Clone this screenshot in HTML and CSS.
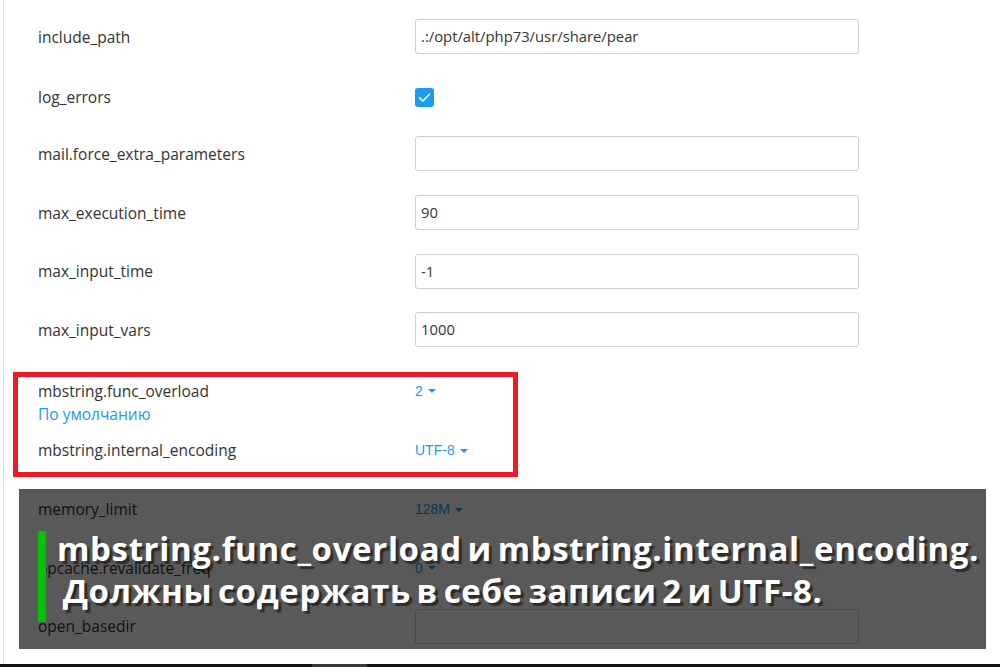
FILE: index.html
```html
<!DOCTYPE html>
<html lang="ru">
<head>
<meta charset="utf-8">
<title>PHP settings</title>
<link rel="stylesheet" href="styles.css">
</head>
<body>
<div class="screen">
  <div class="viewport">
    <div class="sheet">
      <div class="form">
        <div class="row">
          <div class="label">include_path</div>
          <div class="value"><div class="input">.:/opt/alt/php73/usr/share/pear</div></div>
        </div>
        <div class="row row-check">
          <div class="label">log_errors</div>
          <div class="value">
            <span class="checkbox">
              <svg width="19" height="19" viewBox="0 0 19 19"><path d="M4.5 9.8 L7.9 13 L14.5 6.2" fill="none" stroke="#fff" stroke-width="1.6" stroke-linecap="round" stroke-linejoin="round"/></svg>
            </span>
          </div>
        </div>
        <div class="row">
          <div class="label">mail.force_extra_parameters</div>
          <div class="value"><div class="input"></div></div>
        </div>
        <div class="row">
          <div class="label">max_execution_time</div>
          <div class="value"><div class="input">90</div></div>
        </div>
        <div class="row">
          <div class="label">max_input_time</div>
          <div class="value"><div class="input">-1</div></div>
        </div>
        <div class="row">
          <div class="label">max_input_vars</div>
          <div class="value"><div class="input">1000</div></div>
        </div>
        <div class="row row-noted">
          <div class="label">mbstring.func_overload</div>
          <div class="value"><span class="select">2<span class="caret"></span></span></div>
          <div class="note">По умолчанию</div>
        </div>
        <div class="row">
          <div class="label">mbstring.internal_encoding</div>
          <div class="value"><span class="select">UTF-8<span class="caret"></span></span></div>
        </div>
        <div class="row">
          <div class="label">memory_limit</div>
          <div class="value"><span class="select">128M<span class="caret"></span></span></div>
        </div>
        <div class="row">
          <div class="label">opcache.revalidate_freq</div>
          <div class="value"><span class="select">0<span class="caret"></span></span></div>
        </div>
        <div class="row">
          <div class="label">open_basedir</div>
          <div class="value"><div class="input"></div></div>
        </div>
      </div>

      <div class="highlight"></div>

      <div class="caption">
        <div class="caption-bar"></div>
        <div class="caption-text">
          <div class="caption-line">mbstring.func_overload и mbstring.internal_encoding.</div>
          <div class="caption-line"> Должны содержать в себе записи 2 и UTF-8.</div>
        </div>
      </div>
    </div>
  </div>
  <div class="scrollbar"><div class="scroll-thumb"></div></div>
</div>
</body>
</html>
```

FILE: styles.css
```css
* { box-sizing: border-box; }

html, body {
  margin: 0;
  padding: 0;
  background: #fff;
}

body {
  font-family: "Open Sans", "Noto Sans", sans-serif;
  font-size: 15.5px;
  color: #333;
}

.screen {
  width: 1000px;
  height: 667px;
  display: flex;
  flex-direction: column;
  overflow: hidden;
}

.viewport {
  flex: 1;
  overflow: hidden;
  background: #fff;
}

.sheet {
  position: relative;
  margin-left: 3px;
  min-height: 100%;
  border-left: 1px solid #e4e4e4;
  padding-left: 34px;
}

.form {
  display: flex;
  flex-direction: column;
  gap: 23.7px;
  padding-top: 19px;
}

.row {
  display: grid;
  grid-template-columns: 377px 444px;
  align-items: center;
  min-height: 35px;
}

.label {
  line-height: 20px;
  color: #333;
}

.value {
  display: flex;
  align-items: center;
  height: 35px;
}

.input {
  width: 444px;
  height: 35px;
  border: 1px solid #cfcfcf;
  border-radius: 3px;
  padding: 0 5px;
  line-height: 33px;
  font-size: 14.8px;
  color: #333;
  background: #fff;
}

.row-check {
  margin-top: 2px;
  margin-bottom: -2px;
}

.checkbox {
  display: block;
  width: 19px;
  height: 19px;
  border-radius: 3px;
  background: #1a9bf0;
}

.checkbox svg { display: block; }

.row-noted {
  margin-top: 2px;
  margin-bottom: -14px;
}

.note {
  grid-column: 1;
  margin-top: -2px;
  line-height: 17px;
  font-size: 15.5px;
  color: #1a9bf0;
}

.select {
  display: inline-flex;
  align-items: center;
  gap: 5px;
  font-family: "Liberation Sans", Arial, sans-serif;
  font-size: 14px;
  color: #1a9bf0;
}

.caret {
  width: 0;
  height: 0;
  border-left: 4px solid transparent;
  border-right: 4px solid transparent;
  border-top: 4px solid #1a9bf0;
  margin-top: 1px;
}

.highlight {
  position: absolute;
  left: 9px;
  top: 372px;
  width: 505px;
  height: 105px;
  border: 5px solid #ed1c24;
}

.caption {
  position: absolute;
  left: 15px;
  top: 489px;
  width: 967px;
  height: 160px;
  background: rgba(0, 0, 0, 0.65);
  display: flex;
  align-items: flex-start;
  padding: 42px 0 0 19px;
}

.caption-bar {
  width: 8px;
  height: 91px;
  background: #00c300;
  flex: none;
}

.caption-text {
  margin-left: 11px;
  margin-top: -3px;
  font-family: "Open Sans", "Noto Sans", sans-serif;
  font-weight: 700;
  font-size: 33px;
  line-height: 42px;
  letter-spacing: 0.65px;
  word-spacing: -3.5px;
  color: #fff;
  text-shadow: 3px 3px 1px rgba(0, 0, 0, 0.5);
}

.caption-line {
  white-space: pre;
}

.scrollbar {
  height: 3px;
  flex: none;
  background: #141414;
}

.scroll-thumb {
  margin-left: 312px;
  width: 55px;
  height: 3px;
  background: #3a3a3a;
}
```
